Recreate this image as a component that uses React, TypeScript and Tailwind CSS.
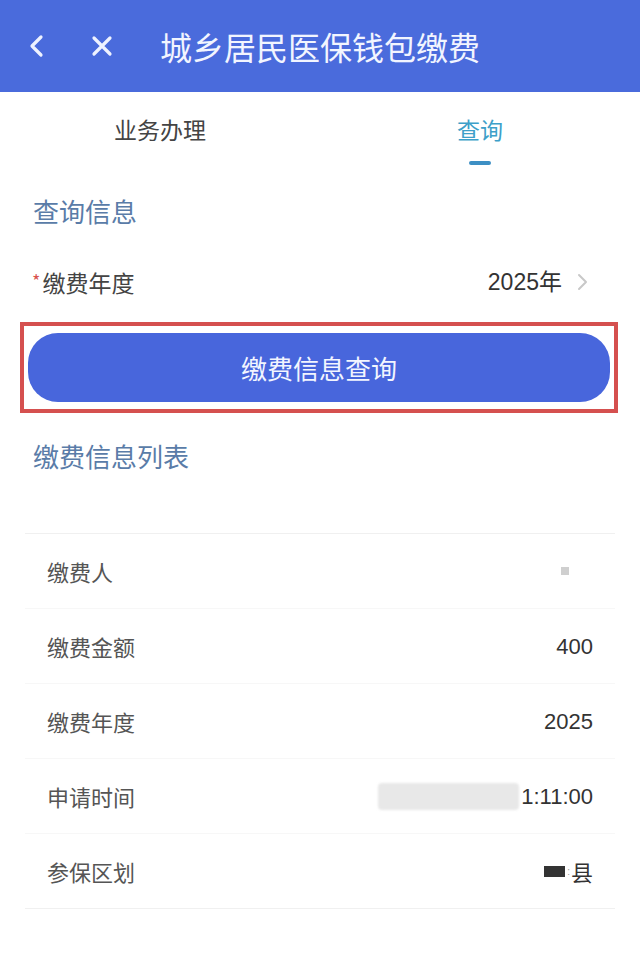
import React from "react";

const font = { fontFamily: '"Noto Sans CJK SC", "Noto Sans", sans-serif' };

function Row({ label, children, last }: { label: string; children: React.ReactNode; last?: boolean }) {
  return (
    <div className={`h-[75px] flex items-center justify-between px-[22px] ${last ? "border-b border-[#f0f0f0]" : "border-b border-[#f7f7f7]"}`}>
      <span className="text-[22px] text-[#555]">{label}</span>
      <div className="flex items-center text-[22px] text-[#333] [font-family:'Liberation_Sans','Noto_Sans_CJK_SC',sans-serif]">{children}</div>
    </div>
  );
}

export default function App() {
  return (
    <div className="w-[640px] h-[967px] bg-white overflow-hidden" style={font}>
      <div className="h-[92px] bg-[#4a6bdc] flex items-center pl-[27px]">
        <svg width="18" height="26" viewBox="0 0 18 26" fill="none">
          <path d="M14 4 L5 13 L14 22" stroke="#eef2ff" strokeWidth="3.2" strokeLinecap="round" strokeLinejoin="round" />
        </svg>
        <svg className="ml-[45px]" width="24" height="24" viewBox="0 0 24 24" fill="none">
          <path d="M4 4 L20 20 M20 4 L4 20" stroke="#eef2ff" strokeWidth="3.2" strokeLinecap="round" />
        </svg>
        <span className="ml-[46px] text-[32px] text-[#f2f5ff]">城乡居民医保钱包缴费</span>
      </div>

      <div className="h-[86px] grid grid-cols-2">
        <div className="flex flex-col items-center pt-[22px]">
          <span className="text-[23px] leading-[30px] text-[#444]">业务办理</span>
        </div>
        <div className="flex flex-col items-center pt-[22px]">
          <span className="text-[23px] leading-[30px] text-[#3d9fc9]">查询</span>
          <div className="mt-[17px] h-[4px] w-[22px] rounded-full bg-[#3d8fc4]" />
        </div>
      </div>

      <div className="h-[64px] flex items-center px-[33px]">
        <span className="text-[26px] text-[#5a7ca8]">查询信息</span>
      </div>

      <div className="h-[80px] flex items-center justify-between pl-[32px] pr-[52px]">
        <div className="flex items-center">
          <span className="text-[18px] text-[#d9534f] mr-[2px] -mt-[4px]">*</span>
          <span className="text-[23px] text-[#444]">缴费年度</span>
        </div>
        <div className="flex items-center">
          <span className="text-[23px] text-[#333] [font-family:'Liberation_Sans','Noto_Sans_CJK_SC',sans-serif]">2025年</span>
          <svg className="ml-[14px]" width="12" height="20" viewBox="0 0 12 20" fill="none">
            <path d="M3 3 L10 10 L3 17" stroke="#c8c8c8" strokeWidth="2" strokeLinecap="round" strokeLinejoin="round" />
          </svg>
        </div>
      </div>

      <div className="ml-[20px] w-[598px] h-[91px] border-[4px] border-[#d5504f] px-[4px] py-[7px]">
        <div className="h-full rounded-[30px] bg-[#4866dc] flex items-center justify-center">
          <span className="text-[26px] text-[#f2f5ff]">缴费信息查询</span>
        </div>
      </div>

      <div className="h-[84px] flex items-center px-[33px]">
        <span className="text-[26px] text-[#5a7ca8]">缴费信息列表</span>
      </div>

      <div className="mt-[36px] mx-[25px] border-t border-[#f0f0f0]">
        <Row label="缴费人">
          <div className="w-[8px] h-[8px] bg-[#cfcfcf] blur-[0.5px] mr-[24px]" />
        </Row>
        <Row label="缴费金额">400</Row>
        <Row label="缴费年度">2025</Row>
        <Row label="申请时间">
          <div className="w-[141px] h-[27px] rounded-[4px] bg-[#e8e8e8] blur-[1px] mr-[2px]" />
          <span>1:11:00</span>
        </Row>
        <Row label="参保区划" last>
          <div className="w-[21px] h-[11px] bg-[#333] mr-[2px]" />
          <span className="text-[10px] text-[#999] mr-[1px]">:</span>
          <span style={font}>县</span>
        </Row>
      </div>
    </div>
  );
}
